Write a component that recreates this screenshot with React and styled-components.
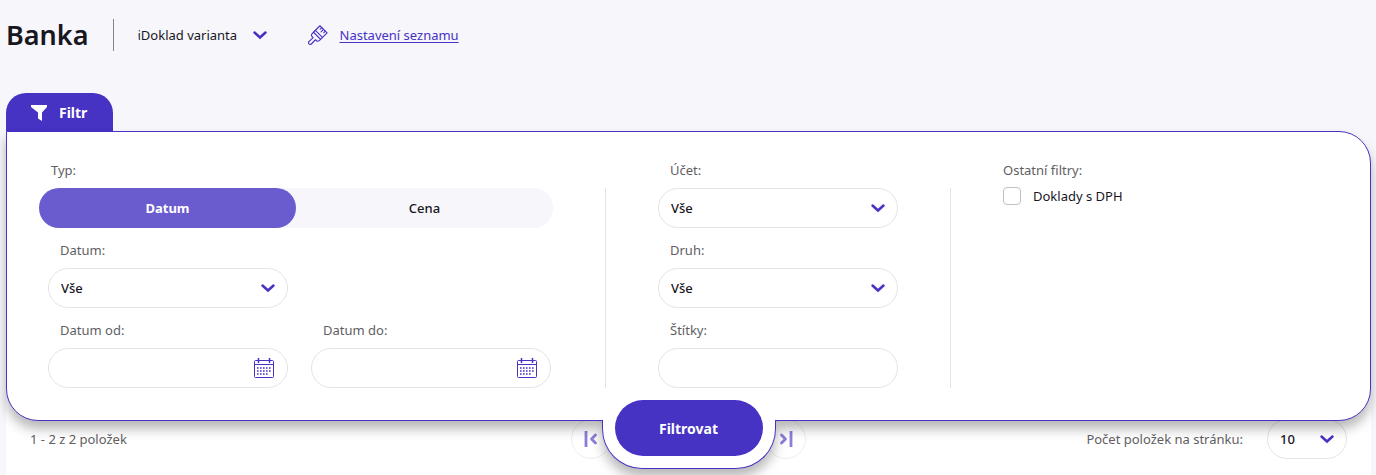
import React from 'react'
import styled, { createGlobalStyle } from 'styled-components'

const GlobalStyle = createGlobalStyle`
        * {
                box-sizing: border-box;
        }
        body {
                margin: 0;
                background-color: #F6F6FB;
                color: #18161F;
                font-family: "Noto Sans", "Open Sans", sans-serif;
                font-size: 13px;
                line-height: 20px;
        }
        button, input, select {
                font-family: inherit;
                font-size: inherit;
                color: inherit;
        }
`

const Page = styled.main`
        padding: 15px 5px 0 6px;
`

const Header = styled.header`
        display: flex;
        align-items: center;
        height: 40px;
`

const Title = styled.h1`
        margin: 0;
        padding-right: 24px;
        font-size: 27px;
        line-height: 32px;
        font-weight: 600;
        border-right: 1px solid #86848B;
`

const SelectBox = styled.div`
        position: relative;
        width: ${props => props.$width};

        svg {
                position: absolute;
                right: ${props => props.$bare ? '0' : '12px'};
                top: 50%;
                margin-top: -8px;
                pointer-events: none;
        }
`

const Select = styled.select`
        appearance: none;
        display: block;
        width: 100%;
        height: 40px;
        padding: 0 32px 0 12px;
        border: 1px solid #E4E4E7;
        border-radius: 20px;
        background-color: transparent;
        font-weight: 500;
        outline: none;
`

const VariantSelect = styled(Select)`
        padding: 0 24px 0 0;
        border: none;
        font-weight: 400;
`

const VariantBox = styled.div`
        margin: 0 40px 0 24px;
`

const SettingsLink = styled.a`
        display: flex;
        align-items: center;
        gap: 12px;
        color: #4632C3;
        text-underline-offset: 2px;
`

const FilterTab = styled.button`
        display: flex;
        align-items: center;
        gap: 12px;
        height: 38px;
        margin-top: 38px;
        padding: 0 26px 0 25px;
        border: none;
        border-radius: 20px 20px 0 0;
        background-color: #4632C3;
        color: #FFFFFF;
        font-size: 14px;
        font-weight: 700;
`

const FilterPanel = styled.form`
        position: relative;
        z-index: 1;
        filter: drop-shadow(0 8px 6px rgba(0, 0, 0, 0.28));
`

const FilterBody = styled.div`
        display: flex;
        align-items: flex-start;
        padding: 28px 32px 32px;
        border: 1px solid #4632C3;
        border-radius: 0 32px 32px 32px;
        background-color: #FFFFFF;
`

const Column = styled.div`
        display: grid;
        gap: 12px;
        width: ${props => props.$width};
`

const Divider = styled.div`
        align-self: stretch;
        width: 1px;
        margin: 28px 52px 0;
        background-color: #E4E4E7;
`

const Field = styled.div`
        width: ${props => props.$width};
`

const Label = styled.label`
        display: block;
        height: 28px;
        padding-left: 12px;
        color: #5F5E63;
`

const GroupLabel = styled.div`
        height: ${props => props.$indent ? '28px' : '26px'};
        padding-left: ${props => props.$indent ? '12px' : '0'};
        color: #5F5E63;
`

const Switch = styled.div`
        display: flex;
        border-radius: 20px;
        background-color: #F6F6FB;
`

const SwitchButton = styled.button`
        flex: 1;
        height: 40px;
        border: none;
        border-radius: 20px;
        background-color: ${props => props.$active ? '#6A5BCF' : 'transparent'};
        color: ${props => props.$active ? '#FFFFFF' : '#18161F'};
        font-weight: ${props => props.$active ? '700' : '500'};
`

const DateFields = styled.div`
        display: grid;
        grid-template-columns: 240px 240px;
        gap: 12px 23px;
        padding-left: 9px;
`

const FullRow = styled.div`
        grid-column: 1 / -1;
`

const InputBox = styled.div`
        display: flex;
        align-items: center;
        height: 40px;
        padding: 0 13px 0 12px;
        border: 1px solid #E4E4E7;
        border-radius: 20px;
`

const Input = styled.input`
        flex: 1;
        min-width: 0;
        border: none;
        outline: none;
        background-color: transparent;
`

const IconButton = styled.button`
        display: flex;
        padding: 0;
        border: none;
        background-color: transparent;
`

const CheckLabel = styled.label`
        display: flex;
        align-items: center;
        gap: 12px;
        height: 20px;
`

const Checkbox = styled.input`
        appearance: none;
        width: 18px;
        height: 18px;
        margin: 0;
        border: 1px solid #C2C2C6;
        border-radius: 4px;
        background-color: #FFFFFF;
`

const SubmitBox = styled.div`
        position: absolute;
        left: 50%;
        bottom: -48px;
        display: flex;
        align-items: flex-end;
        width: 174px;
        height: 49px;
        padding: 0 12px 12px;
        border: 1px solid #4632C3;
        border-top: none;
        border-radius: 0 0 40px 40px;
        background-color: #FFFFFF;
        transform: translateX(-50%);
`

const SubmitButton = styled.button`
        width: 100%;
        height: 56px;
        border: none;
        border-radius: 28px;
        background-color: #4632C3;
        color: #FFFFFF;
        font-size: 14px;
        font-weight: 700;
`

const ListFooter = styled.footer`
        display: grid;
        grid-template-columns: 1fr auto 1fr;
        align-items: center;
        margin-top: -22px;
        padding: 20px 24px 16px;
        background-color: #FFFFFF;
        color: #5F5E63;
`

const Pager = styled.nav`
        display: flex;
        justify-content: space-between;
        width: 235px;
`

const PagerButton = styled.button`
        display: flex;
        align-items: center;
        justify-content: center;
        width: 40px;
        height: 40px;
        padding: 0;
        border: 1px solid #EEEEF0;
        border-radius: 20px;
        background-color: transparent;
`

const PageSize = styled.div`
        display: flex;
        align-items: center;
        justify-content: flex-end;
        gap: 24px;
        color: #18161F;

        label {
                color: #5F5E63;
        }
`

const Chevron = () => (
    <svg width="16" height="16" viewBox="0 0 16 16" fill="none" stroke="#4632C3" strokeWidth="2.5" strokeLinecap="round">
        <path d="M2.5 5.5 8 10.5l5.5-5" />
    </svg>
)

const BrushIcon = () => (
    <svg width="20" height="20" viewBox="0 0 21 21" fill="none" stroke="#4632C3" strokeWidth="1.2" strokeLinejoin="round" strokeLinecap="round">
        <path d="M12.5.8 20 8.3 13.200 15 5.800 7.600z" />
        <path d="M5.800 7.600 4.400 9c-1 1-1 2.300 0 3.200l1 1-4.200 4c-.7.7-.8 1.800-.1 2.600.7.7 1.900.7 2.700-.1l4-4.200 1 .8c.8.9 2 1 3 .1l1.400-1.400M7.800 5.700l7.300 7.300" />
        <path d="m14.400 2.700-1.600 1.600M16.300 4.600l-2.600 2.600M18.200 6.500l-1.600 1.600" />
    </svg>
)

const FunnelIcon = () => (
    <svg width="16" height="18" viewBox="0 0 16 18" fill="#FFFFFF">
        <path d="M0 2h16v2l-5 5.500V18l-4-2.500v-6L0 4z" />
    </svg>
)

const CalendarIcon = () => (
    <svg width="20" height="20" viewBox="0 0 20 20" fill="none" stroke="#4632C3" strokeWidth="1">
        <rect x=".5" y="2.5" width="19" height="17" rx="1" />
        <path d="M.5 6.5h19" />
        <path d="M4.5 0v5M15.5 0v5" strokeWidth="1.5" />
        <path d="M3 10h14M3 13h14M3 16h11" strokeWidth="1.5" strokeDasharray="1.6 1.4" />
    </svg>
)

const FirstPageIcon = ({ flip }) => (
    <svg width="14" height="16" viewBox="0 0 14 16" fill="none" stroke="#8B7EDA" strokeWidth="2.8" transform={flip ? 'scale(-1 1)' : undefined}>
        <path d="M2 0v16" />
        <path d="M11.5 4 7.5 8l4 4" strokeLinecap="round" strokeLinejoin="round" />
    </svg>
)

const SelectField = ({ id, label }) => (
    <Field $width="240px">
        <Label htmlFor={id}>{label}</Label>
        <SelectBox $width="100%">
            <Select id={id}>
                <option>Vše</option>
            </Select>
            <Chevron />
        </SelectBox>
    </Field>
)

const DateField = ({ id, label }) => (
    <Field $width="240px">
        <Label htmlFor={id}>{label}</Label>
        <InputBox>
            <Input id={id} type="text" />
            <IconButton type="button" aria-label="Kalendář"><CalendarIcon /></IconButton>
        </InputBox>
    </Field>
)

const App = () => {
    return (
        <Page>
            <GlobalStyle />
            <Header>
                <Title>Banka</Title>
                <VariantBox>
                    <SelectBox $width="130px" $bare>
                        <VariantSelect aria-label="Varianta">
                            <option>iDoklad varianta</option>
                        </VariantSelect>
                        <Chevron />
                    </SelectBox>
                </VariantBox>
                <SettingsLink href="#">
                    <BrushIcon />
                    Nastavení seznamu
                </SettingsLink>
            </Header>
            <FilterTab type="button">
                <FunnelIcon />
                Filtr
            </FilterTab>
            <FilterPanel onSubmit={e => e.preventDefault()}>
                <FilterBody>
                    <Column $width="514px">
                        <div>
                            <GroupLabel $indent>Typ:</GroupLabel>
                            <Switch>
                                <SwitchButton type="button" $active>Datum</SwitchButton>
                                <SwitchButton type="button">Cena</SwitchButton>
                            </Switch>
                        </div>
                        <DateFields>
                            <FullRow>
                                <SelectField id="datum" label="Datum:" />
                            </FullRow>
                            <DateField id="datum-od" label="Datum od:" />
                            <DateField id="datum-do" label="Datum do:" />
                        </DateFields>
                    </Column>
                    <Divider />
                    <Column $width="240px">
                        <SelectField id="ucet" label="Účet:" />
                        <SelectField id="druh" label="Druh:" />
                        <Field $width="240px">
                            <Label htmlFor="stitky">Štítky:</Label>
                            <InputBox>
                                <Input id="stitky" type="text" />
                            </InputBox>
                        </Field>
                    </Column>
                    <Divider />
                    <div>
                        <GroupLabel>Ostatní filtry:</GroupLabel>
                        <CheckLabel>
                            <Checkbox type="checkbox" />
                            Doklady s DPH
                        </CheckLabel>
                    </div>
                </FilterBody>
                <SubmitBox>
                    <SubmitButton type="submit">Filtrovat</SubmitButton>
                </SubmitBox>
            </FilterPanel>
            <ListFooter>
                <span>1 - 2 z 2 položek</span>
                <Pager aria-label="Stránkování">
                    <PagerButton type="button" aria-label="První"><FirstPageIcon /></PagerButton>
                    <PagerButton type="button" aria-label="Poslední"><FirstPageIcon flip /></PagerButton>
                </Pager>
                <PageSize>
                    <label htmlFor="pocet">Počet položek na stránku:</label>
                    <SelectBox $width="80px">
                        <Select id="pocet">
                            <option>10</option>
                        </Select>
                        <Chevron />
                    </SelectBox>
                </PageSize>
            </ListFooter>
        </Page>
    )
}

export default App
